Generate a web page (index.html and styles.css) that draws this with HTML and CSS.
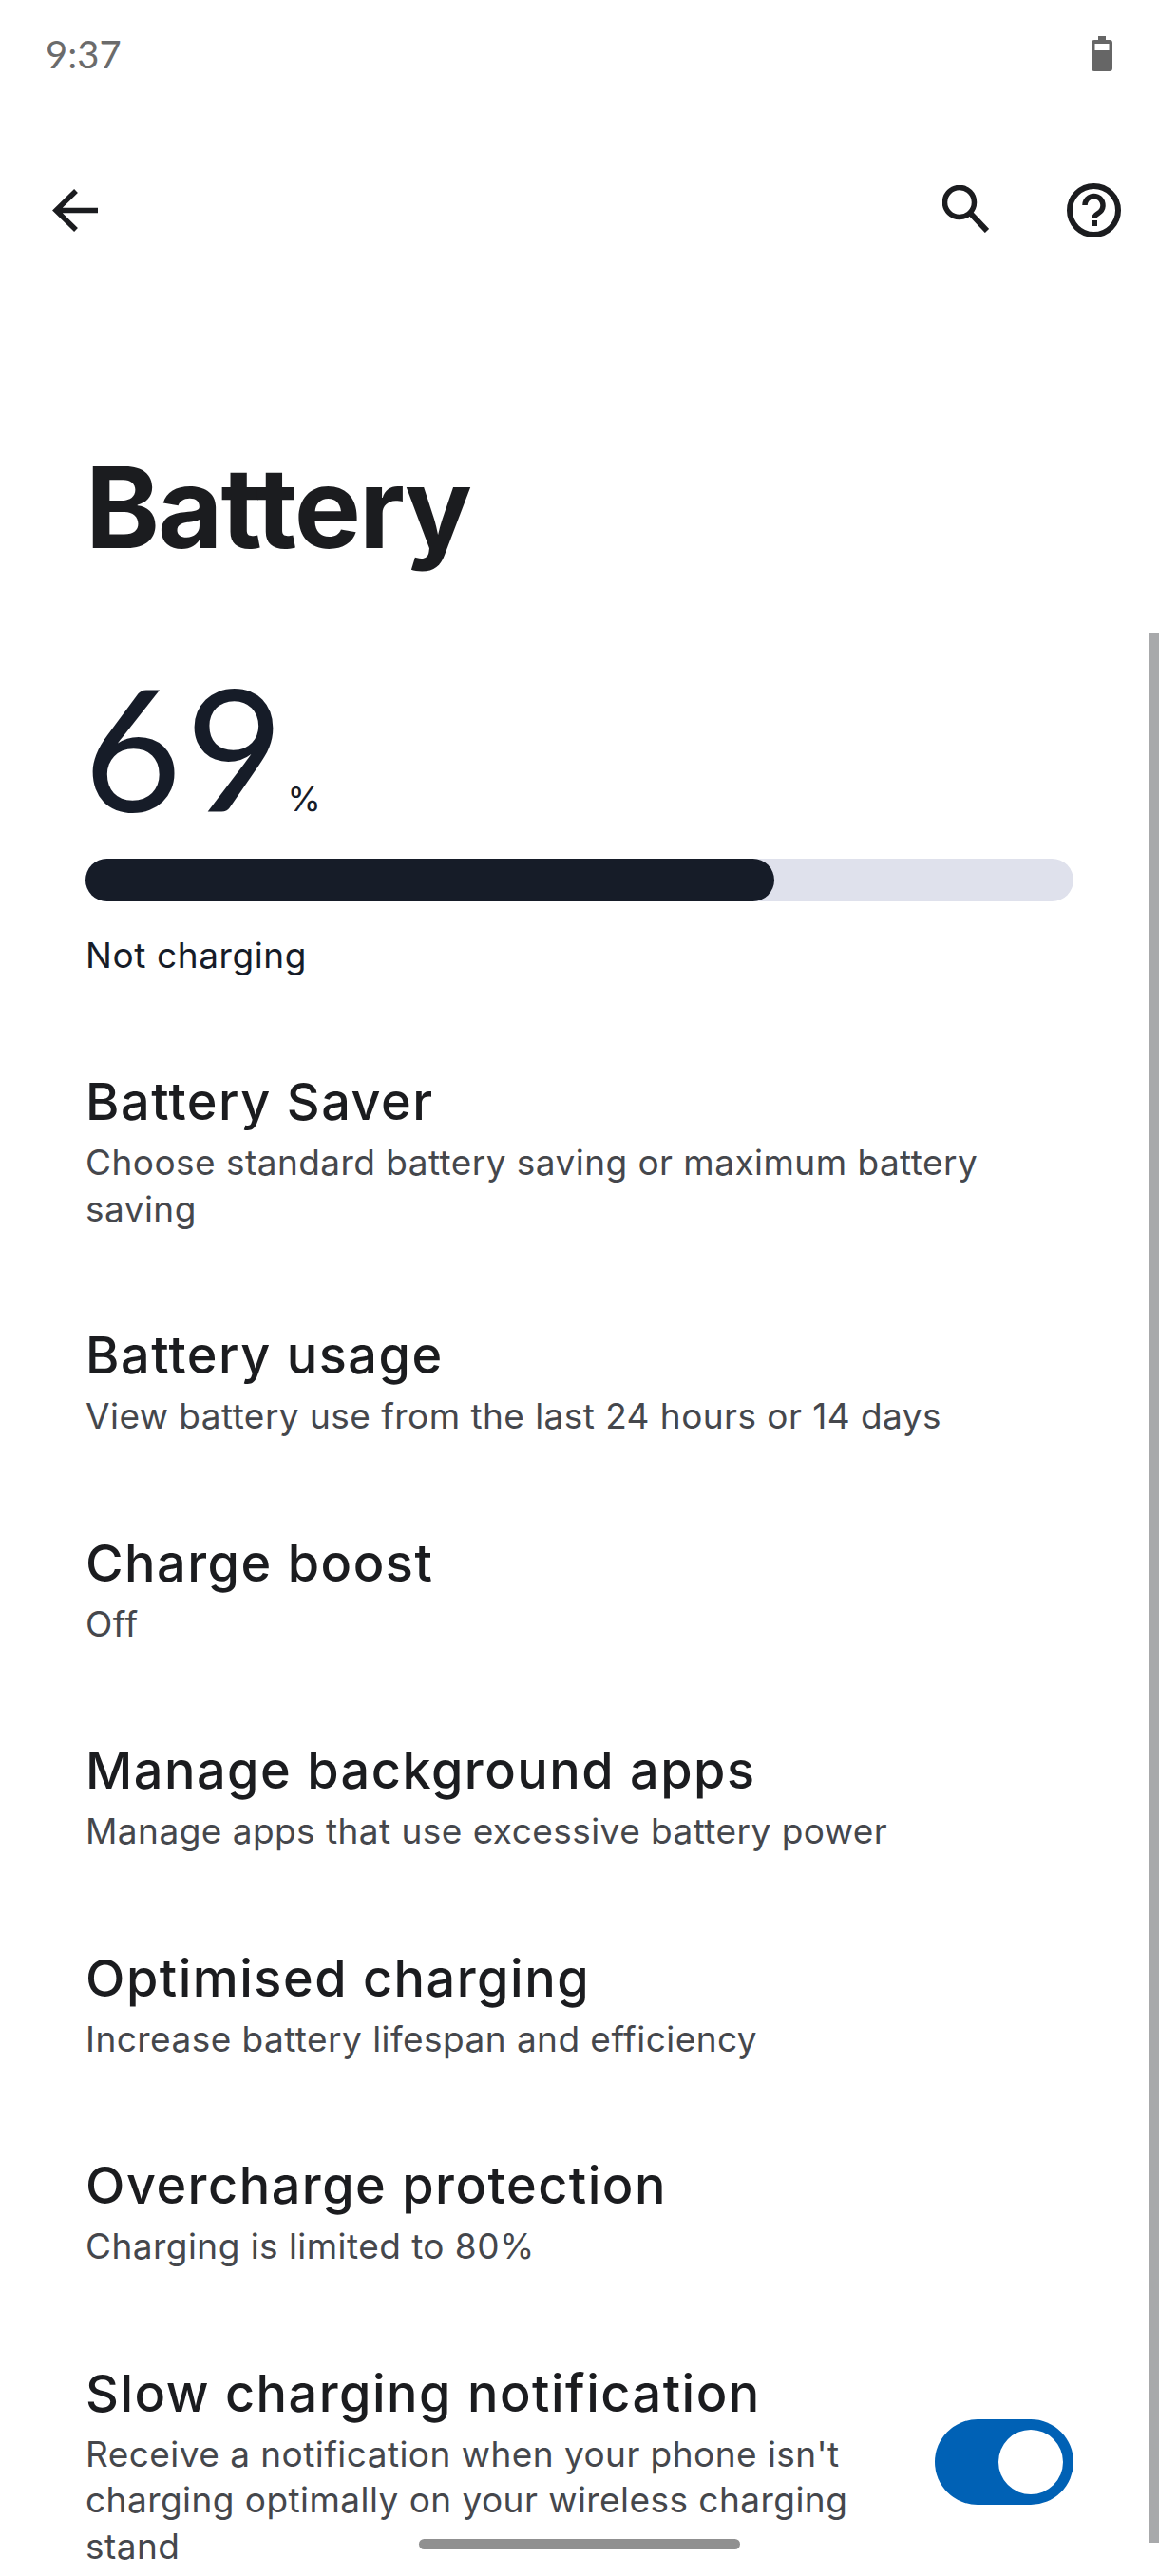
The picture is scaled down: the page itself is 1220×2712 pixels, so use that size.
FILE: index.html
```html
<!DOCTYPE html>
<html lang="en">

<head>
  <meta charset="UTF-8" />
  <meta name="viewport" content="width=device-width, initial-scale=1.0" />
  <title>Battery</title>
  <link rel="stylesheet" href="styles.css">
</head>

<body>
  <div class="statusbar">
    <span class="time">9:37</span>
    <svg class="battery-icon" viewBox="0 0 22 37">
      <path d="M7 0h8v4h4a3 3 0 0 1 3 3v27a3 3 0 0 1-3 3H3a3 3 0 0 1-3-3V7a3 3 0 0 1 3-3h4z" fill="#666" />
      <rect x="3.500" y="8" width="15" height="7" fill="#fff" />
    </svg>
  </div>

  <div class="toolbar">
    <svg class="back-icon" viewBox="0 0 49 45">
      <path d="M49 22.500H6M26 2 5 22.500 26 43" fill="none" stroke="#1b1c1f" stroke-width="5.500" />
    </svg>
    <div class="toolbar-right">
      <svg class="search-icon" viewBox="0 0 49 50">
        <circle cx="18" cy="18" r="15.500" fill="none" stroke="#1b1c1f" stroke-width="5.500" />
        <path d="M29 29l18 19" fill="none" stroke="#1b1c1f" stroke-width="6" />
      </svg>
      <svg class="help-icon" viewBox="0 0 57 57">
        <circle cx="28.500" cy="28.500" r="25.500" fill="none" stroke="#1b1c1f" stroke-width="6" />
        <path d="M19 23a9.500 9.500 0 1 1 16 7c-3 2.500-6 3.500-6 6" fill="none" stroke="#1b1c1f" stroke-width="5.500" />
        <rect x="26" y="39" width="6" height="6" fill="#1b1c1f" />
      </svg>
    </div>
  </div>

  <h1 class="page-title">Battery</h1>

  <div class="level">
    <span class="level-num">69</span><span class="level-pct">%</span>
  </div>
  <div class="bar">
    <div class="bar-fill" style="width: 69.700%"></div>
  </div>
  <div class="bar-label">Not charging</div>

  <div class="list">
    <div class="row">
      <div class="row-text">
        <div class="row-title">Battery Saver</div>
        <div class="row-sub">Choose standard battery saving or maximum battery saving</div>
      </div>
    </div>
    <div class="row">
      <div class="row-text">
        <div class="row-title">Battery usage</div>
        <div class="row-sub">View battery use from the last 24 hours or 14 days</div>
      </div>
    </div>
    <div class="row">
      <div class="row-text">
        <div class="row-title">Charge boost</div>
        <div class="row-sub">Off</div>
      </div>
    </div>
    <div class="row">
      <div class="row-text">
        <div class="row-title">Manage background apps</div>
        <div class="row-sub">Manage apps that use excessive battery power</div>
      </div>
    </div>
    <div class="row">
      <div class="row-text">
        <div class="row-title">Optimised charging</div>
        <div class="row-sub">Increase battery lifespan and efficiency</div>
      </div>
    </div>
    <div class="row">
      <div class="row-text">
        <div class="row-title">Overcharge protection</div>
        <div class="row-sub">Charging is limited to 80%</div>
      </div>
    </div>
    <div class="row">
      <div class="row-text narrow">
        <div class="row-title">Slow charging notification</div>
        <div class="row-sub">Receive a notification when your phone isn't charging optimally on your wireless charging stand</div>
      </div>
      <div class="toggle">
        <div class="knob"></div>
      </div>
    </div>
  </div>

  <div class="scrollbar"></div>
  <div class="home-pill"></div>
</body>

</html>
```

FILE: styles.css
```css
* {
  box-sizing: border-box;
}

html,
body {
  margin: 0;
  height: 2712px;
  overflow: hidden;
}

body {
  position: relative;
  background-color: #fff;
  font-family: Inter, "Liberation Sans", sans-serif;
  color: #1b1c1f;
}

.statusbar {
  height: 115px;
  padding: 38px 49px 0 48px;
  display: flex;
  justify-content: space-between;
  align-items: flex-start;
}

.time {
  font-family: Lato, sans-serif;
  font-size: 40px;
  line-height: 38px;
  color: #6b6b6b;
}

.battery-icon {
  width: 22px;
  height: 37px;
}

.toolbar {
  height: 354px;
  padding: 78px 40px 0 54px;
  display: flex;
  justify-content: space-between;
  align-items: flex-start;
}

.toolbar svg {
  display: block;
}

.back-icon {
  width: 49px;
  height: 45px;
  margin-top: 6px;
}

.toolbar-right {
  display: flex;
  gap: 82px;
}

.search-icon {
  width: 49px;
  height: 50px;
  margin-top: 2px;
}

.help-icon {
  width: 57px;
  height: 57px;
}

.page-title {
  margin: 0;
  padding-left: 90px;
  font-size: 118px;
  line-height: 130px;
  font-weight: 700;
  letter-spacing: -2px;
}

.level {
  margin-top: 98px;
  padding-left: 88px;
  height: 179px;
  display: flex;
  align-items: flex-end;
  color: #161c28;
}

.level-num {
  font-family: Lato, sans-serif;
  font-weight: 400;
  font-size: 178px;
  line-height: 179px;
  letter-spacing: 4px;
}

.level-pct {
  font-family: Inter, sans-serif;
  font-size: 36px;
  line-height: 70px;
}

.bar {
  margin: 28px 90px 0;
  height: 45px;
  border-radius: 23px;
  background-color: #dfe1ec;
}

.bar-fill {
  height: 45px;
  border-radius: 23px;
  background-color: #161c28;
}

.bar-label {
  margin-top: 27px;
  padding-left: 90px;
  font-size: 37px;
  line-height: 60px;
  letter-spacing: 0.600px;
  color: #161c28;
}

.list {
  margin-top: 39px;
  padding: 0 90px;
}

.row {
  padding: 45px 0;
  display: flex;
  justify-content: space-between;
  align-items: center;
}

.row-text {
  flex: 1;
}

.row-text.narrow {
  max-width: 850px;
}

.row-title {
  font-size: 54px;
  line-height: 80px;
  font-weight: 550;
  letter-spacing: 1.500px;
}

.row-sub {
  font-size: 37px;
  line-height: 48.500px;
  letter-spacing: 0.450px;
  color: #45474c;
}

.toggle {
  width: 146px;
  height: 90px;
  padding: 11px;
  border-radius: 45px;
  background-color: #0061b5;
  display: flex;
  justify-content: flex-end;
}

.knob {
  width: 68px;
  height: 68px;
  border-radius: 50%;
  background-color: #fff;
}

.scrollbar {
  position: absolute;
  left: 1209px;
  top: 666px;
  width: 11px;
  height: 2011px;
  background-color: #a8a9ab;
}

.home-pill {
  position: absolute;
  left: 441px;
  top: 2673px;
  width: 338px;
  height: 11px;
  border-radius: 6px;
  background-color: #909090;
}
```
